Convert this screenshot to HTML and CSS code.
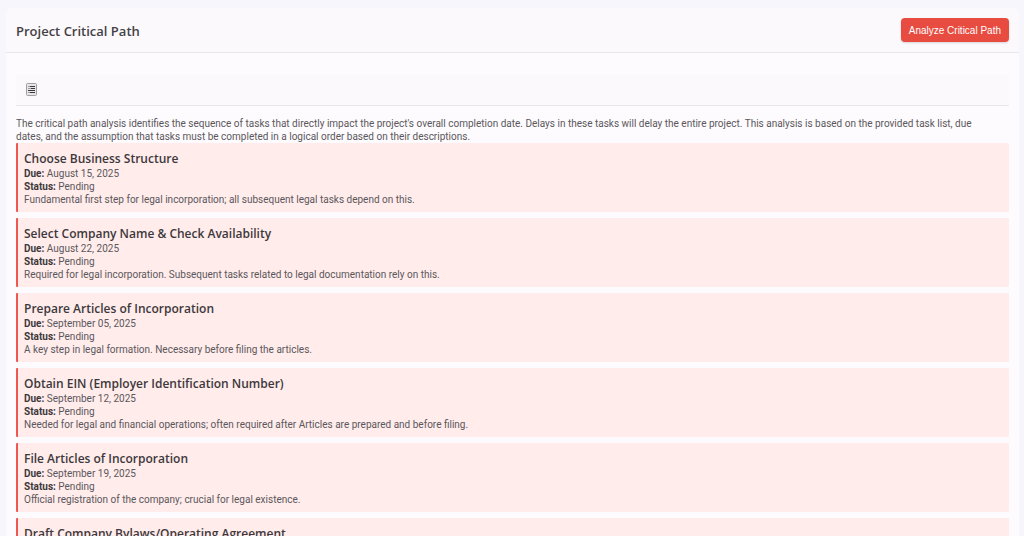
FILE: index.html
```html
<!DOCTYPE html>
<html lang="en">
    <head>
        <meta charset="utf-8">
        <title>Project Critical Path</title>
        <link rel="stylesheet" href="styles.css">
    </head>
    <body>
        <main class="panel">
            <header class="panel-header">
                <h1>Project Critical Path</h1>
                <button type="button" class="analyze-btn">Analyze Critical Path</button>
            </header>

            <div class="panel-body">
                <div class="toolbar">
                    <button type="button" class="align-btn" aria-label="Toggle text direction">
                        <svg width="11" height="13" viewBox="0 0 11 13">
                            <rect x="0.5" y="0.5" width="10" height="12" rx="1" fill="#e6e5e8" stroke="#a19fa3"/>
                            <path d="M4 3.5h5M5 5.5h4M2 7.5h7M4 9.5h5" stroke="#3b393d" stroke-width="1.2"/>
                            <path d="M2 3.5h2M2 5.5h3M2 9.5h2" stroke="#a19fa3"/>
                        </svg>
                    </button>
                </div>

                <p class="summary">The critical path analysis identifies the sequence of tasks that directly impact the project's overall completion date. Delays in these tasks will delay the entire project. This analysis is based on the provided task list, due dates, and the assumption that tasks must be completed in a logical order based on their descriptions.</p>

                <!-- Tasks on the critical path, in order -->
                <ul class="task-list">
                    <li class="task">
                        <h2>Choose Business Structure</h2>
                        <p><strong>Due:</strong> August 15, 2025</p>
                        <p><strong>Status:</strong> Pending</p>
                        <p>Fundamental first step for legal incorporation; all subsequent legal tasks depend on this.</p>
                    </li>
                    <li class="task">
                        <h2>Select Company Name &amp; Check Availability</h2>
                        <p><strong>Due:</strong> August 22, 2025</p>
                        <p><strong>Status:</strong> Pending</p>
                        <p>Required for legal incorporation. Subsequent tasks related to legal documentation rely on this.</p>
                    </li>
                    <li class="task">
                        <h2>Prepare Articles of Incorporation</h2>
                        <p><strong>Due:</strong> September 05, 2025</p>
                        <p><strong>Status:</strong> Pending</p>
                        <p>A key step in legal formation. Necessary before filing the articles.</p>
                    </li>
                    <li class="task">
                        <h2>Obtain EIN (Employer Identification Number)</h2>
                        <p><strong>Due:</strong> September 12, 2025</p>
                        <p><strong>Status:</strong> Pending</p>
                        <p>Needed for legal and financial operations; often required after Articles are prepared and before filing.</p>
                    </li>
                    <li class="task">
                        <h2>File Articles of Incorporation</h2>
                        <p><strong>Due:</strong> September 19, 2025</p>
                        <p><strong>Status:</strong> Pending</p>
                        <p>Official registration of the company; crucial for legal existence.</p>
                    </li>
                    <li class="task">
                        <h2>Draft Company Bylaws/Operating Agreement</h2>
                    </li>
                </ul>
            </div>
        </main>
    </body>
</html>
```
FILE: styles.css
```css
* {
    box-sizing: border-box;
}

html {
    height: 100%;
    overflow: hidden; /*no scrollbar*/
}

body {
    margin: 0;
    padding: 8px 5px 0 6px;
    height: 100%;
    overflow: hidden;
    background: #f7f6fc;
    color: #5b575b;
    font-family: Roboto, sans-serif;
    font-size: 10px;
    line-height: 13px;
}

h1, h2, p, ul {
    margin: 0;
    padding: 0;
}

h1, h2 {
    font-family: "Segoe UI", "Open Sans", sans-serif;
}

.panel {
    background: #fdfbfe;
    border-radius: 6px 6px 0 0;
}

/* Header */
.panel-header {
    display: flex;
    align-items: center;
    justify-content: space-between;
    padding: 10px;
    background: #fbf9fc;
    border-bottom: 1px solid #e9e7eb;
    border-radius: 6px 6px 0 0;
}

h1 {
    padding-top: 2px;
    color: #434145;
    font-size: 13px;
    font-weight: 600;
    line-height: 22px;
}

.analyze-btn {
    height: 24px;
    padding: 0 8px;
    border: 0;
    border-radius: 4px;
    background: #e84b40;
    box-shadow: 0 1px 2px rgba(0, 0, 0, 0.15);
    color: #fff;
    font-family: "Liberation Sans", Arial, sans-serif;
    font-size: 10px;
    cursor: pointer;
}

/* Body */
.panel-body {
    padding: 22px 10px;
}

.toolbar {
    display: flex;
    align-items: center;
    height: 31px;
    padding: 0 10px 2px;
    background: #fbf9fc;
    border-bottom: 1px solid #e9e7eb;
}

.align-btn {
    display: flex;
    padding: 0;
    border: 0;
    background: none;
    cursor: pointer;
}

.summary {
    padding: 11px 20px 0 0;
}

.task-list {
    display: grid;
    gap: 6px;
    list-style: none;
}

.task {
    padding: 8px 6px 6px;
    border-left: 2px solid #ee5851;
    border-radius: 1px;
    background: #ffeceb;
}

.task h2 {
    color: #3d383b;
    font-size: 12px;
    font-weight: 600;
    line-height: 16px;
}

.task strong {
    color: #3d383b;
    font-weight: 700;
}
```
